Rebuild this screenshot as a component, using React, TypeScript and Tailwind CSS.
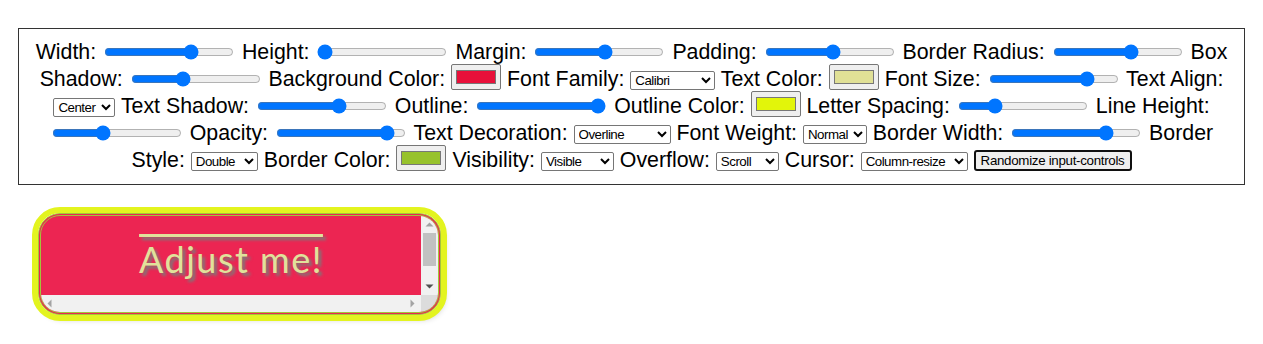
import React from "react";

const ranges: Record<string, number> = {
  width: 69,
  height: 0,
  margin: 55,
  padding: 53,
  radius: 62,
  shadow: 39,
  fontSize: 79,
  textShadow: 65,
  outline: 100,
  letter: 26,
  lineHeight: 38,
  opacity: 90,
  borderWidth: 76,
};

function Range({ value }: { value: number }) {
  return (
    <input
      type="range"
      min={0}
      max={100}
      defaultValue={value}
      className="mx-[2px] -my-[2px] h-[16px] w-[130px] align-[-1px]"
    />
  );
}

function Swatch({ value }: { value: string }) {
  return (
    <input
      type="color"
      defaultValue={value}
      className="-my-[4px] h-[26px] w-[50px] rounded-[2px] border border-[#767676] bg-[#efefef] px-[2px] py-[1px] align-[2px]"
    />
  );
}

function Pick({ label, width }: { label: string; width: string }) {
  return (
    <select
      className={`-my-[2px] h-[19px] rounded-[2px] border border-[#767676] bg-white text-[13.33px] tracking-[-0.5px] text-black align-[1px] ${width}`}
      defaultValue={label}
    >
      <option>{label}</option>
    </select>
  );
}

export default function App() {
  return (
    <div className="min-h-screen bg-white px-[18px] pt-[28px] font-['Liberation_Sans',Arial,sans-serif] text-black">
      <div className="border border-[#333] px-[10px] py-[10px] text-center text-[21.33px] leading-[27px]">
        Width: <Range value={ranges.width} /> Height: <Range value={ranges.height} /> Margin:{" "}
        <Range value={ranges.margin} /> Padding: <Range value={ranges.padding} /> Border Radius:{" "}
        <Range value={ranges.radius} /> Box Shadow: <Range value={ranges.shadow} /> Background Color:{" "}
        <Swatch value="#e8103a" /> Font Family: <Pick label="Calibri" width="w-[85px]" /> Text Color:{" "}
        <Swatch value="#e0e096" /> Font Size: <Range value={ranges.fontSize} /> Text Align:{" "}
        <Pick label="Center" width="w-[62px]" /> Text Shadow: <Range value={ranges.textShadow} /> Outline:{" "}
        <Range value={ranges.outline} /> Outline Color: <Swatch value="#e2f50a" /> Letter Spacing:{" "}
        <Range value={ranges.letter} /> Line Height: <Range value={ranges.lineHeight} /> Opacity:{" "}
        <Range value={ranges.opacity} /> Text Decoration: <Pick label="Overline" width="w-[97px]" /> Font
        Weight: <Pick label="Normal" width="w-[64px]" /> Border Width: <Range value={ranges.borderWidth} />{" "}
        Border Style: <Pick label="Double" width="w-[67px]" /> Border Color: <Swatch value="#97c22c" />{" "}
        Visibility: <Pick label="Visible" width="w-[73px]" /> Overflow: <Pick label="Scroll" width="w-[63px]" />{" "}
        Cursor: <Pick label="Column-resize" width="w-[107px]" />{" "}
        <button className="-my-[2px] h-[21px] rounded-[3px] border-2 border-[#101010] bg-[#efefef] px-[5px] align-[2px] text-[13.33px] leading-[15px] tracking-[-0.3px]">
          Randomize input-controls
        </button>
      </div>

      <div className="ml-[20px] mt-[28px] flex h-[102px] w-[403px] flex-col overflow-hidden rounded-[22px] border-[3px] border-double border-[#a3c53a] bg-[#ec2552] shadow-[3px_4px_6px_rgba(0,0,0,0.25)] outline-[6px] outline-[#e3f41f] outline-solid">
        <div className="flex min-h-0 flex-1">
          <div className="flex-1 overflow-hidden pt-[22px] text-center font-['Lato','Open_Sans',sans-serif] text-[36px] leading-[43px] tracking-[1.5px] text-[#e0e29b] overline [text-shadow:3px_3px_3px_#7a7a7a]">
            Adjust me!
          </div>
          <div className="flex w-[17px] flex-col items-center bg-[#f1f1f1]">
            <svg width="17" height="17" viewBox="0 0 17 17">
              <path d="M4.5 10.5 L8.5 6.5 L12.5 10.5 Z" fill="#a3a3a3" />
            </svg>
            <div className="h-[33px] w-[13px] bg-[#c1c1c1]" />
            <div className="flex-1" />
            <svg width="17" height="17" viewBox="0 0 17 17">
              <path d="M4.5 6.5 L8.5 10.5 L12.5 6.5 Z" fill="#505050" />
            </svg>
          </div>
        </div>
        <div className="flex h-[17px]">
          <div className="flex flex-1 items-center justify-between bg-[#f1f1f1]">
            <svg width="17" height="17" viewBox="0 0 17 17">
              <path d="M10.5 4.5 L6.5 8.5 L10.5 12.5 Z" fill="#a3a3a3" />
            </svg>
            <svg width="17" height="17" viewBox="0 0 17 17">
              <path d="M6.5 4.5 L10.5 8.5 L6.5 12.5 Z" fill="#a3a3a3" />
            </svg>
          </div>
          <div className="w-[17px] bg-[#dcdcdc]" />
        </div>
      </div>
    </div>
  );
}
